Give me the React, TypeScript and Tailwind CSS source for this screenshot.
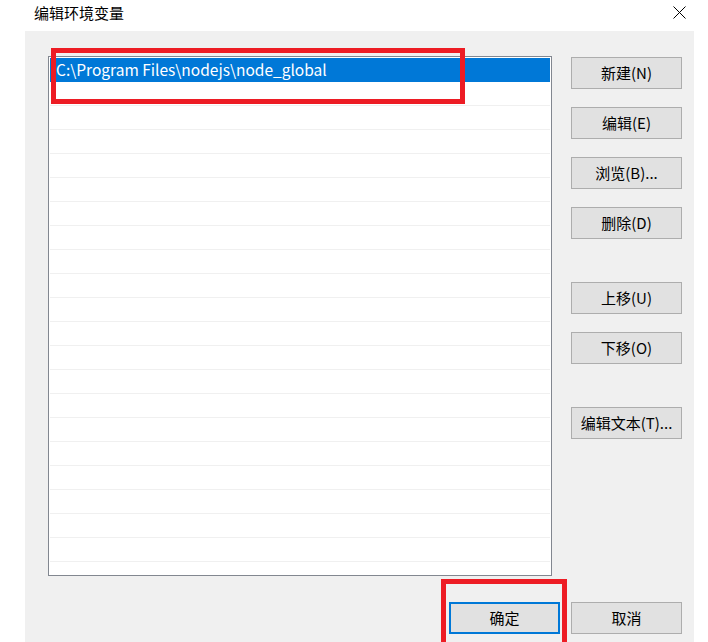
import React from "react";

const font = { fontFamily: '"Noto Sans CJK SC", "Noto Sans", sans-serif' };

/*** side buttons ***/
const sideButtons = [
  { label: "新建(N)", mt: "mt-[1px]" },
  { label: "编辑(E)", mt: "mt-[18px]" },
  { label: "浏览(B)...", mt: "mt-[18px]" },
  { label: "删除(D)", mt: "mt-[18px]" },
  { label: "上移(U)", mt: "mt-[43px]" },
  { label: "下移(O)", mt: "mt-[18px]" },
  { label: "编辑文本(T)...", mt: "mt-[43px]" },
];

function WinButton({
  label,
  className = "",
  focused = false,
}: {
  label: string;
  className?: string;
  focused?: boolean;
}) {
  return (
    <div
      className={`w-[111px] h-[32px] bg-[#e1e1e1] flex items-center justify-center pb-[2px] text-[15px] text-black leading-none ${
        focused ? "border-2 border-[#0078d7]" : "border border-[#adadad]"
      } ${className}`}
    >
      {label}
    </div>
  );
}

/*****************************************************
           Component
*****************************************************/
export default function App() {
  const rows = Array.from({ length: 21 });
  return (
    <div
      className="relative w-[708px] h-[642px] bg-white overflow-hidden text-black"
      style={font}
    >
      {/* title bar */}
      <div className="h-[31px] flex justify-between">
        <div className="pl-[34px] pt-[3px] text-[15px] leading-[20px]">
          编辑环境变量
        </div>
        <svg
          className="mt-[6px] mr-[22px]"
          width="13"
          height="13"
          viewBox="0 0 13 13"
        >
          <path d="M0.5 0.5 L12.5 12.5 M12.5 0.5 L0.5 12.5" stroke="#000" strokeWidth="1" />
        </svg>
      </div>

      {/* dialog body */}
      <div className="ml-[25px] w-[669px] h-[611px] bg-[#f0f0f0] pl-[23px] pt-[25px]">
        <div className="flex">
          <div className="w-[504px] h-[520px] bg-white border border-[#828790] p-[1px] overflow-hidden">
            {rows.map((_, i) =>
              i === 0 ? (
                <div
                  key={i}
                  className="h-[24px] bg-[#0078d7] text-white text-[15.5px] pl-[6px] flex items-center leading-none"
                >
                  C:\Program Files\nodejs\node_global
                </div>
              ) : (
                <div key={i} className="h-[24px] border-b border-[#f0f0f0]" />
              )
            )}
          </div>
          <div className="ml-[19px] flex flex-col">
            {sideButtons.map((b) => (
              <WinButton key={b.label} label={b.label} className={b.mt} />
            ))}
          </div>
        </div>
        <div className="flex mt-[26px] ml-[401px] gap-[11px]">
          <WinButton label="确定" focused />
          <WinButton label="取消" />
        </div>
      </div>

      {/* red annotation boxes */}
      <div className="absolute left-[51px] top-[48px] w-[414px] h-[56px] border-[5px] border-[#ed1c24]" />
      <div className="absolute left-[441px] top-[579px] w-[126px] h-[80px] border-[5px] border-[#ed1c24]" />
    </div>
  );
}
